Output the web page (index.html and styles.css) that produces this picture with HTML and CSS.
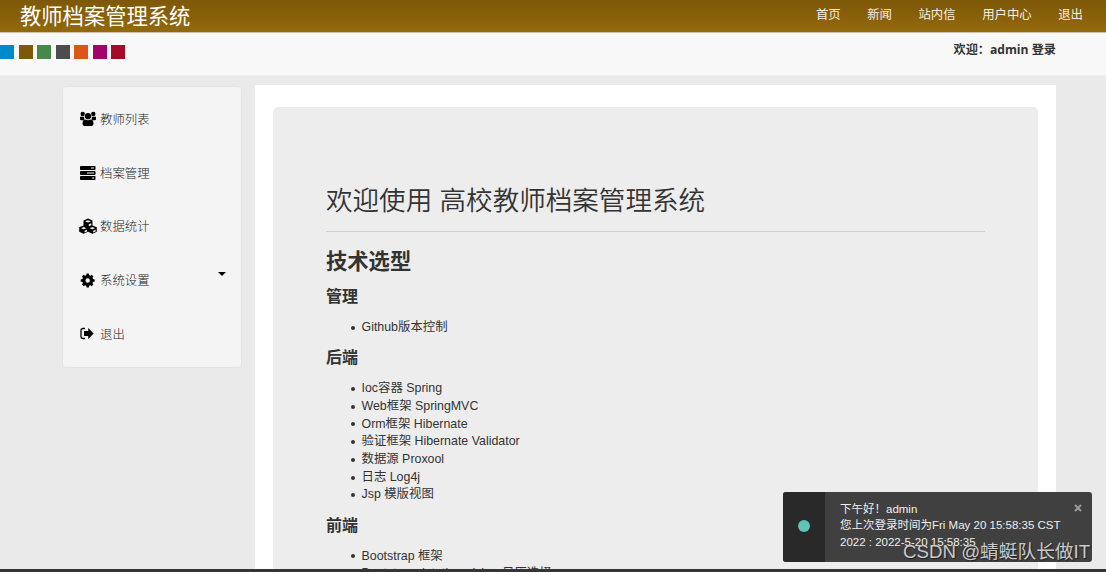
FILE: index.html
```html
<!DOCTYPE html>
<html lang="zh-CN">
<head>
    <meta charset="UTF-8">
    <meta name="viewport" content="width=device-width, initial-scale=1.0">
    <title>教师档案管理系统</title>
    <link rel="stylesheet" href="styles.css">
</head>
<body>
    <header class="navbar">
        <a class="brand" href="#">教师档案管理系统</a>
        <nav class="nav">
            <a href="#">首页</a>
            <a href="#">新闻</a>
            <a href="#">站内信</a>
            <a href="#">用户中心</a>
            <a href="#">退出</a>
        </nav>
    </header>
    <div class="subbar">
        <div class="themes">
            <span class="blue"></span>
            <span class="brown"></span>
            <span class="green"></span>
            <span class="gray"></span>
            <span class="orange"></span>
            <span class="purple"></span>
            <span class="red"></span>
        </div>
        <strong class="welcome">欢迎：admin 登录</strong>
    </div>
    <div class="container">
        <ul class="sidebar">
            <li>
                <svg class="icon" viewBox="0 0 18 16"><circle cx="3.7" cy="3" r="2.2"/><circle cx="14.3" cy="3" r="2.2"/><path d="M1 5.700h4.200v3.600H2.300Q1 9.300 1 8zM12.800 5.700H17V8q0 1.300-1.300 1.300h-2.900z"/><circle cx="9" cy="5.200" r="3.100"/><path d="M3.500 12.500Q3.500 9 6 8.500q3 1.600 6 0 2.500.5 2.500 4 0 2.500-2 2.500h-7q-2 0-2-2.500z"/></svg>
                <a href="#">教师列表</a>
            </li>
            <li>
                <svg class="icon" viewBox="0 0 18 16"><rect x="1" y="1" width="15.500" height="4" rx=".8"/><rect x="1" y="6" width="15.500" height="4" rx=".8"/><rect x="1" y="11" width="15.500" height="4" rx=".8"/><path class="cut" d="M12 3h3M8 8h7M13 13h2"/></svg>
                <a href="#">档案管理</a>
            </li>
            <li>
                <svg class="icon" viewBox="0 0 18 16"><path d="M9 .5 13.500 2.500v5l4.300 1.800v4.400l-4.400 2L9 13.700l-4.400 2-4.400-2V9.300l4.300-1.800v-5z"/><path class="cut fill" d="M6.200 3.300 9 4.400l2.800-1.100L9 2.200zM9.800 6.300v2l2.500-1.100V5.200zM2 10.200l2.700 1.100 2.700-1.100-2.700-1.100zM10.600 10.200l2.700 1.100 2.700-1.100-2.700-1.100zM5.600 12.700v1.800l2.400-1.100v-1.700zM14.200 12.700v1.800l2.400-1.100v-1.700z"/></svg>
                <a href="#">数据统计</a>
            </li>
            <li>
                <svg class="icon" viewBox="0 0 18 16"><path fill-rule="evenodd" d="M7.600 1.500h2.200l.4 1.700 1.100.5 1.500-.9 1.600 1.600-.9 1.500.5 1.100 1.700.4v2.200l-1.700.4-.5 1.100.9 1.500-1.600 1.600-1.500-.9-1.100.5-.4 1.700H7.600l-.4-1.700-1.100-.5-1.500.9L3 12.600l.9-1.500-.5-1.100-1.700-.4V7.400l1.700-.4.500-1.100L3 4.400l1.600-1.600 1.500.9 1.100-.5zM8.700 6.300a2.200 2.200 0 1 0 0 4.400 2.200 2.200 0 0 0 0-4.400z"/></svg>
                <a href="#">系统设置</a>
                <span class="caret"></span>
            </li>
            <li>
                <svg class="icon" viewBox="0 0 18 16"><path class="line" d="M6 2.500H4.200Q2 2.500 2 4.500v6q0 2 2.200 2H6"/><path d="M5.500 5h3.700V2l5.500 5.500L9.200 13v-3H5.500q-.5 0-.5-.5v-4q0-.5.5-.5z"/></svg>
                <a href="#">退出</a>
            </li>
        </ul>
        <main class="content">
            <div class="hero">
                <h1>欢迎使用 高校教师档案管理系统</h1>
                <h2>技术选型</h2>
                <h3>管理</h3>
                <ul>
                    <li>Github版本控制</li>
                </ul>
                <h3>后端</h3>
                <ul>
                    <li>Ioc容器 Spring</li>
                    <li>Web框架 SpringMVC</li>
                    <li>Orm框架 Hibernate</li>
                    <li>验证框架 Hibernate Validator</li>
                    <li>数据源 Proxool</li>
                    <li>日志 Log4j</li>
                    <li>Jsp 模版视图</li>
                </ul>
                <h3>前端</h3>
                <ul>
                    <li>Bootstrap 框架</li>
                    <li>Bootstrap datetimepicker 日历选择</li>
                </ul>
            </div>
        </main>
    </div>
    <div class="toast">
        <div class="toast-side"><span class="dot"></span></div>
        <div class="toast-body">下午好！admin<br>您上次登录时间为Fri May 20 15:58:35 CST<br>2022 : 2022-5-20 15:58:35</div>
        <svg class="close" viewBox="0 0 8 8"><path d="M1 1l6 6M7 1L1 7"/></svg>
    </div>
    <div class="watermark">CSDN @蜻蜓队长做IT</div>
    <div class="bottom-line"></div>
</body>
</html>
```

FILE: styles.css
```css
* { box-sizing: border-box; }
body { margin: 0; height: 572px; overflow: hidden; display: flex; flex-direction: column; background: #eaeaea; color: #333; font: 12.4px/17.7px "Liberation Sans", "Noto Sans CJK SC", sans-serif; }
a { color: inherit; text-decoration: none; }
ul { list-style: none; margin: 0; padding: 0; }

.navbar { flex: none; height: 33px; display: flex; justify-content: space-between; padding: 0 23px 0 20px; background: linear-gradient(#7d5808, #94690d); border-bottom: 1px solid #d3c3ac; color: #fff; }
.brand { font-size: 21.3px; line-height: 35px; }
.nav { display: flex; gap: 26.5px; color: #f3eee4; line-height: 31px; }
.subbar { flex: none; height: 43px; display: flex; justify-content: space-between; padding-right: 50px; background: #f8f8f8; border-bottom: 1px solid #eee; }
.themes { display: flex; gap: 4.5px; padding-top: 12px; }
.themes span { width: 14px; height: 14px; }
.blue { background: #0088cc; }
.brown { background: #7d5808; }
.green { background: #468847; }
.gray { background: #4d4d4d; }
.orange { background: #dc5716; }
.purple { background: #a20469; }
.red { background: #a40b24; }
.welcome { padding-top: 8px; font-family: "Open Sans", "Noto Sans CJK SC", sans-serif; font-size: 12.15px; }

.container { flex: 1; min-height: 0; overflow: hidden; width: 994px; margin-left: 62px; display: flex; align-items: flex-start; justify-content: space-between; padding-top: 9px; }
.sidebar { width: 180px; height: 282px; margin-top: 1px; padding: 5px 16px; background: #f4f4f4; border: 1px solid #e4e4e4; border-radius: 4px; color: #222; font-weight: 300; }
.sidebar li { display: flex; align-items: center; height: 53.7px; }
.sidebar a { padding-top: 4px; }
.icon { width: 18px; height: 16px; margin-right: 3px; }
.icon .cut { fill: none; stroke: #f4f4f4; stroke-width: 1; }
.icon .fill { fill: #f4f4f4; stroke: none; }
.icon .line { fill: none; stroke: #000; stroke-width: 1.3; }
.caret { margin: -12px -1px 0 auto; border: 4px solid transparent; border-top-color: #000; border-bottom: 0; }

.content { width: 801px; height: 500px; padding: 22px 18px; background: #fff; }
.hero { height: 800px; padding: 75px 53px; background: #ededed; border-radius: 5px 5px 0 0; }
.hero h1 { margin: 0 0 13px; padding-bottom: 10px; border-bottom: 1px solid #d0d0d0; font-size: 26.55px; font-weight: 350; line-height: 39px; }
.hero h2 { margin: 0 0 3px; font-size: 21.3px; line-height: 35px; }
.hero h3 { margin: 0; font-size: 16px; line-height: 27px; }
.hero ul { margin: 9px 0 7.5px; padding-left: 25px; }
.hero li { display: flex; align-items: center; }
.hero li::before { content: ""; width: 4px; height: 4px; margin-right: 6.5px; border-radius: 50%; background: #333; }

.toast { position: absolute; left: 783px; top: 492px; width: 309px; height: 70px; display: flex; background: #404040; border-radius: 3px; color: #eee; overflow: hidden; }
.toast-side { width: 42px; display: flex; align-items: center; justify-content: center; padding-bottom: 3px; background: #292929; }
.dot { width: 12px; height: 12px; background: #5fc4b5; border-radius: 50%; }
.toast-body { padding: 9px 0 0 15px; font-size: 11.5px; line-height: 16.3px; white-space: nowrap; }
.close { position: absolute; top: 12px; right: 10px; width: 8px; height: 8px; stroke: #999; stroke-width: 2; }
.watermark { position: absolute; left: 903px; top: 539px; color: #c9c9c9; font-size: 18.7px; line-height: 26px; white-space: nowrap; text-shadow: 1px 1px 1px #222; }
.bottom-line { position: absolute; left: 0; right: 0; bottom: 0; height: 3px; background: #353535; }
```
